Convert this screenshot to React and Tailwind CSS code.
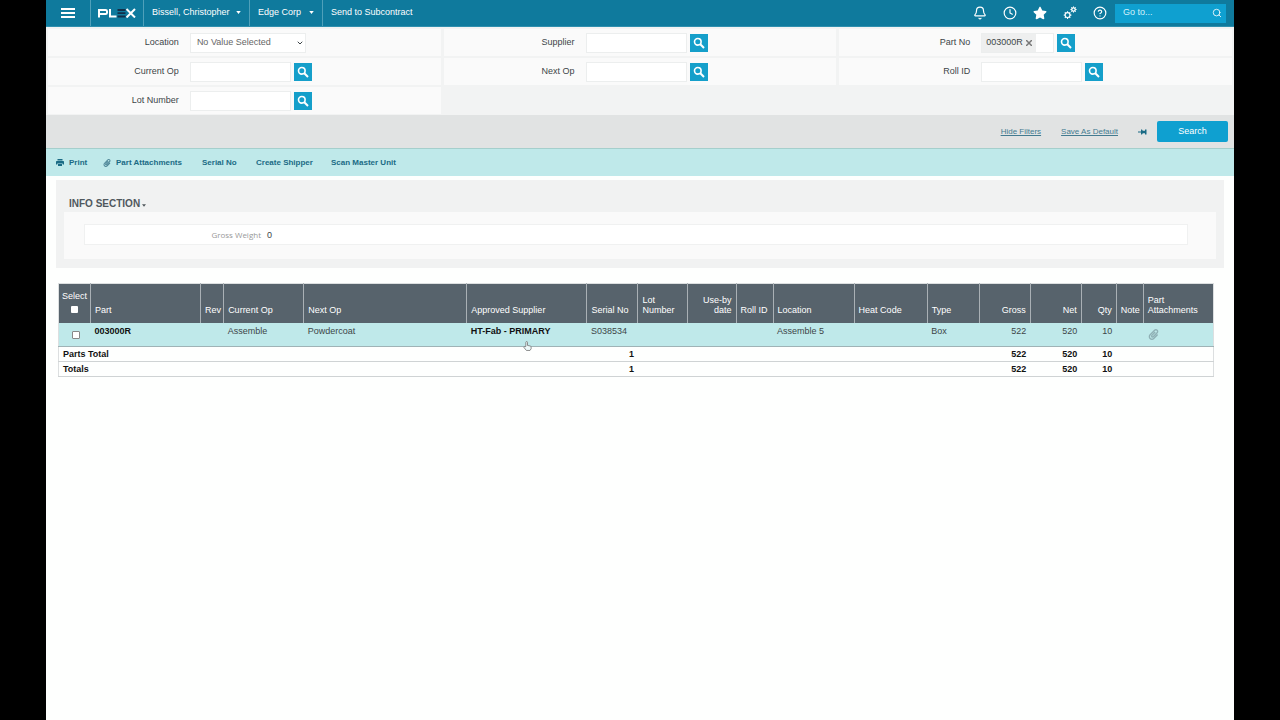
import { Bell, Clock4, CircleHelp, Search, ChevronDown } from "lucide-react";
import { FaStar, FaPaperclip } from "react-icons/fa";

const filters = [
  { id: "location", label: "Location", type: "select" },
  { id: "supplier", label: "Supplier" },
  { id: "part-no", label: "Part No", type: "tag", value: "003000R" },
  { id: "current-op", label: "Current Op" },
  { id: "next-op", label: "Next Op" },
  { id: "roll-id", label: "Roll ID" },
  { id: "lot-number", label: "Lot Number" },
];

const columns = [
  { key: "part", label: "Part", col: "w-[110px]", bold: true },
  { key: "rev", label: "Rev", col: "w-[23px]" },
  { key: "currentOp", label: "Current Op", col: "w-[80px]" },
  { key: "nextOp", label: "Next Op", col: "w-[163px]" },
  { key: "supplier", label: "Approved Supplier", col: "w-[120px]", bold: true },
  { key: "serial", label: "Serial No", col: "w-[51px]" },
  { key: "lot", label: "Lot Number", col: "w-[50px]", wrap: true },
  { key: "useBy", label: "Use-by date", col: "w-[48px]", right: true, wrap: true },
  { key: "roll", label: "Roll ID", col: "w-[37px]" },
  { key: "location", label: "Location", col: "w-[81px]" },
  { key: "heat", label: "Heat Code", col: "w-[73px]" },
  { key: "type", label: "Type", col: "w-[52px]" },
  { key: "gross", label: "Gross", col: "w-[51px]", right: true },
  { key: "net", label: "Net", col: "w-[51px]", right: true },
  { key: "qty", label: "Qty", col: "w-[35px]", right: true },
  { key: "note", label: "Note", col: "w-[27px]" },
  { key: "files", label: "Part Attachments", col: "w-[70px]", wrap: true },
];

const rows = [
  {
    part: "003000R",
    currentOp: "Assemble",
    nextOp: "Powdercoat",
    supplier: "HT-Fab - PRIMARY",
    serial: "S038534",
    location: "Assemble 5",
    type: "Box",
    gross: 522,
    net: 520,
    qty: 10,
    files: <Clip className="mt-1 ml-px size-[11px] text-[#8fb0b5]" />,
  },
];

const totals = [
  { label: "Parts Total", count: 1, gross: 522, net: 520, qty: 10 },
  { label: "Totals", count: 1, gross: 522, net: 520, qty: 10 },
];

function Clip({ className }) {
  return <FaPaperclip className={className} aria-hidden="true" />;
}

function Caret({ className }) {
  return (
    <svg viewBox="0 0 6 4" className={className} fill="currentColor" aria-hidden="true">
      <path d="M0 0h6L3 4z" />
    </svg>
  );
}

function Printer({ className }) {
  return (
    <svg viewBox="0 0 16 14" className={className} fill="currentColor" aria-hidden="true">
      <path d="M3 0h10v3H3zM1.500 4h13Q16 4 16 5.500V11h-2.500V9h-11v2H0V5.500Q0 4 1.500 4zM4 10h8v4H4z" />
    </svg>
  );
}

// Push pin lying on its side, needle to the left
function Pin({ className }) {
  return (
    <svg viewBox="0 0 18 12" className={className} fill="currentColor" aria-hidden="true">
      <path d="M0 5.200h6V1h2l1.500 2.500H14V1h3v10h-3V8.500H9.500L8 11H6V6.800H0z" />
    </svg>
  );
}

function Gear({ cx, cy, r }) {
  const teeth = [0, 45, 90, 135, 180, 225, 270, 315];
  return (
    <g transform={`translate(${cx} ${cy})`}>
      <circle r={r} fill="none" stroke="currentColor" strokeWidth="1.7" />
      {teeth.map((a) => (
        <path key={a} d={`M0 ${-r}v-2`} transform={`rotate(${a})`} stroke="currentColor" strokeWidth="1.5" />
      ))}
    </g>
  );
}

function Logo() {
  return (
    <svg viewBox="0 0 38 10" className="h-[10px] w-[38px]" role="img" aria-label="Plex">
      <g fill="none" stroke="#fff" strokeWidth="2">
        <path d="M1 9.500V2h6.500q1.500 0 1.500 1.200v1.600q0 1.200-1.500 1.200H1" />
        <path d="M12 1v7.500h6.500" />
        <path d="M28.500 1l8.500 8.500M37 1l-8.500 8.500" />
      </g>
      <path d="M19.500 2h8M19.500 5.200h8M19.500 8.500h8" stroke="#12304a" strokeWidth="1.800" />
    </svg>
  );
}

function LookupButton({ label }) {
  return (
    <button type="button" aria-label={`Find ${label}`} className="grid size-[18px] shrink-0 place-items-center bg-[#159fca] text-white">
      <svg viewBox="0 0 12 12" className="size-3" fill="none" stroke="currentColor" aria-hidden="true">
        <circle cx="4.800" cy="4.800" r="3.300" strokeWidth="1.600" />
        <path d="M7.300 7.300l3.700 3.700" strokeWidth="2" />
      </svg>
    </button>
  );
}

function Filter({ id, label, type, value }) {
  return (
    <div className="flex h-[27px] items-center bg-[#fafafa]">
      <label htmlFor={id} className="w-1/3 shrink-0 text-right">
        {label}
      </label>
      <div className="ml-[11px] flex items-center gap-[3px]">
        {type === "select" && (
          <div className="relative">
            <select id={id} className="block h-5 w-[116px] appearance-none border border-[#eceeee] bg-white pl-1.5 text-[#666]">
              <option>No Value Selected</option>
            </select>
            <ChevronDown className="pointer-events-none absolute top-1.5 right-0.5 size-2" strokeWidth={3} />
          </div>
        )}
        {type === "tag" && (
          <div className="flex h-5 w-[73px] border border-[#eceeee] bg-white">
            <span className="flex shrink-0 items-center gap-[3px] bg-[#eeefef] px-1">
              {value}
              <button type="button" aria-label={`Remove ${value}`} className="text-[#777]">
                <svg viewBox="0 0 6 6" className="mt-px size-1.5" stroke="currentColor" strokeWidth="1.500">
                  <path d="M0 0l6 6M6 0L0 6" />
                </svg>
              </button>
            </span>
            <input id={id} className="w-0 min-w-0 flex-1" />
          </div>
        )}
        {!type && <input id={id} className="h-5 w-[101px] border border-[#eceeee] bg-white px-1" />}
        {type !== "select" && <LookupButton label={label} />}
      </div>
    </div>
  );
}

function Header() {
  return (
    <header className="flex h-[27px] items-stretch border-b border-[#2f8fae] bg-[#0f7a9d] text-white">
      <button aria-label="Menu" className="flex w-11 flex-col items-center justify-center gap-[2px]">
        <span className="h-[2px] w-[14px] bg-white" />
        <span className="h-[2px] w-[14px] bg-white" />
        <span className="h-[2px] w-[14px] bg-white" />
      </button>
      <a href="#home" className="flex w-[53px] items-center justify-center border-l border-[#4fa0ba]">
        <Logo />
      </a>
      <button className="flex w-[106px] items-center justify-between border-l border-[#4fa0ba] px-2">
        Bissell, Christopher
        <Caret className="mb-0.5 h-[3px] w-[5px]" />
      </button>
      <button className="flex w-[73px] items-center justify-between border-l border-[#4fa0ba] px-2">
        Edge Corp
        <Caret className="mb-0.5 h-[3px] w-[5px]" />
      </button>
      <h1 className="flex items-center border-l border-[#4fa0ba] pl-2">Send to Subcontract</h1>
      <nav className="ml-auto flex items-center gap-4 pr-2">
        <button aria-label="Notifications">
          <Bell className="size-[14px]" />
        </button>
        <button aria-label="Recent">
          <Clock4 className="size-[14px]" />
        </button>
        <button aria-label="Favorites">
          <FaStar className="size-[14px]" />
        </button>
        <button aria-label="Settings">
          <svg viewBox="0 0 20 20" className="size-[14px]">
            <Gear cx={6.5} cy={13} r={3.5} />
            <Gear cx={15} cy={5} r={2.4} />
          </svg>
        </button>
        <button aria-label="Help">
          <CircleHelp className="size-[14px]" />
        </button>
        <div className="-ml-2 flex h-[19px] w-[111px] items-center bg-[#0fa0d0] pr-1 pl-2">
          <input aria-label="Go to" placeholder="Go to..." className="min-w-0 flex-1 placeholder:text-[#d5f1fa]" />
          <Search className="size-[10px]" />
        </div>
      </nav>
    </header>
  );
}

function Toolbar() {
  return (
    <div className="flex h-7 items-center border-t border-[#a5cfcc] bg-[#bfe9ea] pl-2.5 text-[8px] font-bold text-[#1b6b85]">
      <button className="flex w-[47px] items-center gap-[5px]">
        <Printer className="h-[7px] w-2" />
        Print
      </button>
      <button className="flex w-[99px] items-center gap-[5px]">
        <Clip className="size-2 text-[#4c8496]" />
        Part Attachments
      </button>
      <button className="w-[54px] text-left">Serial No</button>
      <button className="w-[75px] text-left">Create Shipper</button>
      <button>Scan Master Unit</button>
    </div>
  );
}

function InventoryTable() {
  return (
    <table className="w-full table-fixed border-collapse border border-[#dcdfe0] text-left">
      <colgroup>
        <col className="w-8" />
        {columns.map((c) => (
          <col key={c.key} className={c.col} />
        ))}
      </colgroup>
      <thead className="bg-[#57636c] text-white">
        <tr className="h-[39px] align-bottom">
          <th className="p-0 pb-2.5 text-center font-normal">
            <label htmlFor="select-all" className="block leading-3">
              Select
            </label>
            <input id="select-all" type="checkbox" className="mx-auto mt-1 block size-[7px] appearance-none rounded-[1px] bg-white" />
          </th>
          {columns.map((c) => (
            <th
              key={c.key}
              className={`border-l border-[#a9b0b5] px-1 pb-2 leading-[10px] font-normal ${c.wrap ? "" : "whitespace-nowrap"} ${c.right ? "text-right" : ""}`}
            >
              {c.label}
            </th>
          ))}
        </tr>
      </thead>
      <tbody>
        {rows.map((row) => (
          <tr key={row.serial} className="h-6 border-b border-[#9fb3b6] bg-[#bfe9ea] align-top">
            <td className="p-0 pt-2 pl-0.5">
              <input
                type="checkbox"
                aria-label={`Select ${row.part}`}
                className="mx-auto block size-2 appearance-none rounded-[1px] border border-[#888] bg-white"
              />
            </td>
            {columns.map((c) => (
              <td
                key={c.key}
                className={`px-1 pt-[2px] leading-3 whitespace-nowrap ${c.bold ? "font-bold text-[#111]" : ""} ${c.right ? "text-right" : ""}`}
              >
                {row[c.key]}
              </td>
            ))}
          </tr>
        ))}
      </tbody>
      <tfoot className="font-bold text-[#111]">
        {totals.map((t) => (
          <tr key={t.label} className="h-[15px] border-b border-[#cfd3d4] leading-3">
            <td colSpan={6} className="px-1">
              {t.label}
            </td>
            <td className="px-1 text-right">{t.count}</td>
            <td colSpan={6} />
            <td className="px-1 text-right">{t.gross}</td>
            <td className="px-1 text-right">{t.net}</td>
            <td className="px-1 text-right">{t.qty}</td>
            <td colSpan={2} />
          </tr>
        ))}
      </tfoot>
    </table>
  );
}

export default function App() {
  return (
    <div className="min-h-screen bg-black px-[46px] font-['Liberation_Sans',Arial,sans-serif] text-[9px] text-[#3d4548]">
      <div className="relative min-h-screen bg-[#fefffe]">
        <Header />

        <form onSubmit={(e) => e.preventDefault()}>
          <div className="grid grid-cols-3 gap-x-[3px] gap-y-[2px] bg-[#f2f3f3] px-0.5 pt-[2px] pb-px">
            {filters.map((f) => (
              <Filter key={f.id} {...f} />
            ))}
          </div>
          <div className="flex h-[33px] items-center justify-end bg-[#e1e3e3] pr-1.5 text-[#437b90]">
            <a href="#hide" className="mr-5 text-[8px] underline">
              Hide Filters
            </a>
            <a href="#save" className="mr-5 text-[8px] underline">
              Save As Default
            </a>
            <button type="button" aria-label="Pin filters" className="mr-2.5">
              <Pin className="h-1.5 w-[9px] text-[#1b6b85]" />
            </button>
            <button className="h-[21px] w-[71px] rounded-[2px] bg-[#0fa0d0] text-white">Search</button>
          </div>
        </form>

        <Toolbar />

        <section className="mx-2.5 mt-1 bg-[#f1f2f2] px-2 pt-4 pb-[9px]">
          <h2 className="mb-[2px] flex h-[14px] items-center gap-0.5 pl-[5px] text-[10px] font-bold text-[#50585d]">
            INFO SECTION
            <Caret className="mt-1 h-[3px] w-1" />
          </h2>
          <div className="bg-[#fafafa] pt-3 pr-7 pb-[14px] pl-5">
            <dl className="flex h-[21px] items-center border border-[#f0f1f1] bg-white">
              <dt className="w-[176px] text-right font-['Open_Sans',sans-serif] text-[8px] leading-3 text-[#999]">Gross Weight</dt>
              <dd className="ml-1.5 leading-3">0</dd>
            </dl>
          </div>
        </section>

        <div className="mt-[15px] pr-5 pl-3">
          <InventoryTable />
        </div>

        {/* Hand cursor resting on the row */}
        <svg
          viewBox="0 0 16 18"
          className="absolute top-[341px] left-[477px] h-[10px] w-[9px]"
          fill="#eefafa"
          stroke="#777"
          strokeWidth="1.5"
        >
          <path d="M5 10V2.500a1.500 1.500 0 0 1 3 0V8l5 1q1.500.5 1.500 2v3l-2 3H6l-4.500-5.500q0-2 2-1.500z" />
        </svg>
      </div>
    </div>
  );
}
